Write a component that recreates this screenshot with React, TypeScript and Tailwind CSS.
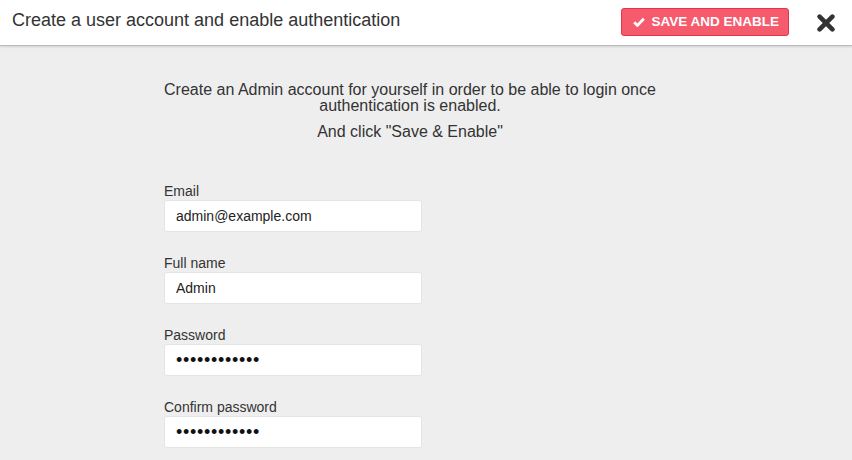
import React from "react";

function CheckIcon() {
  return (
    <svg width="12" height="10" viewBox="0 0 12 10" className="block">
      <path d="M1.2 5.2 L4.4 8.4 L10.8 1.8" fill="none" stroke="#ffffff" strokeWidth="2.8" strokeLinecap="butt" strokeLinejoin="miter" />
    </svg>
  );
}

function CloseIcon() {
  return (
    <svg width="18" height="18" viewBox="0 0 18 18" className="block">
      <path d="M2.6 2.6 L15.4 15.4 M15.4 2.6 L2.6 15.4" fill="none" stroke="#333333" strokeWidth="4.6" strokeLinecap="round" />
    </svg>
  );
}

function Field({ label, value, type = "text" }: { label: string; value: string; type?: string }) {
  const isPw = type === "password";
  return (
    <div className="flex flex-col">
      <label className="block text-[14px] leading-[14px] text-[#333333] mb-[2px]">{label}</label>
      <input
        readOnly
        type={type}
        value={value}
        className={
          isPw
            ? "w-[258px] h-[32px] border border-[#e4e4e4] rounded-[3px] bg-white px-[11px] text-[18px] tracking-[0.7px] text-[#111111] outline-none"
            : "w-[258px] h-[32px] border border-[#e4e4e4] rounded-[3px] bg-white px-[11px] text-[14px] text-[#222222] outline-none"
        }
        style={{ fontFamily: '"Liberation Sans", Arial, sans-serif' }}
      />
    </div>
  );
}

export default function App() {
  return (
    <div className="min-h-screen bg-[#eeeeee] text-[#333333]" style={{ fontFamily: '"Liberation Sans", Arial, sans-serif' }}>
      <div className="h-[46px] bg-white border-b border-[#bcbcbc] shadow-[0_1px_2px_rgba(0,0,0,0.12)] flex items-start">
        <div className="flex-1 pl-[12px] mt-[8px] text-[18px] leading-[24px] text-[#333333]">
          Create a user account and enable authentication
        </div>
        <button className="mt-[8px] h-[28px] flex items-center gap-[6px] pl-[11px] pr-[9px] bg-[#f65a6d] border border-[#e2354c] rounded-[3px] text-white text-[13.5px] font-bold leading-none uppercase">
          <CheckIcon />
          <span>Save and Enable</span>
        </button>
        <div className="ml-[28px] mr-[17px] mt-[14px]">
          <CloseIcon />
        </div>
      </div>
      <div className="pt-[36px]">
        <div className="ml-[160px] w-[500px]">
          <p className="text-center text-[16px] leading-[16px]">
            Create an Admin account for yourself in order to be able to login once authentication is enabled.
          </p>
          <p className="text-center text-[16px] leading-[16px] mt-[10px]">And click "Save &amp; Enable"</p>
          <div className="mt-[44px] pl-[4px] flex flex-col gap-[24px]">
            <Field label="Email" value="admin@example.com" />
            <Field label="Full name" value="Admin" />
            <Field label="Password" value="123456789012" type="password" />
            <Field label="Confirm password" value="123456789012" type="password" />
          </div>
        </div>
      </div>
    </div>
  );
}
